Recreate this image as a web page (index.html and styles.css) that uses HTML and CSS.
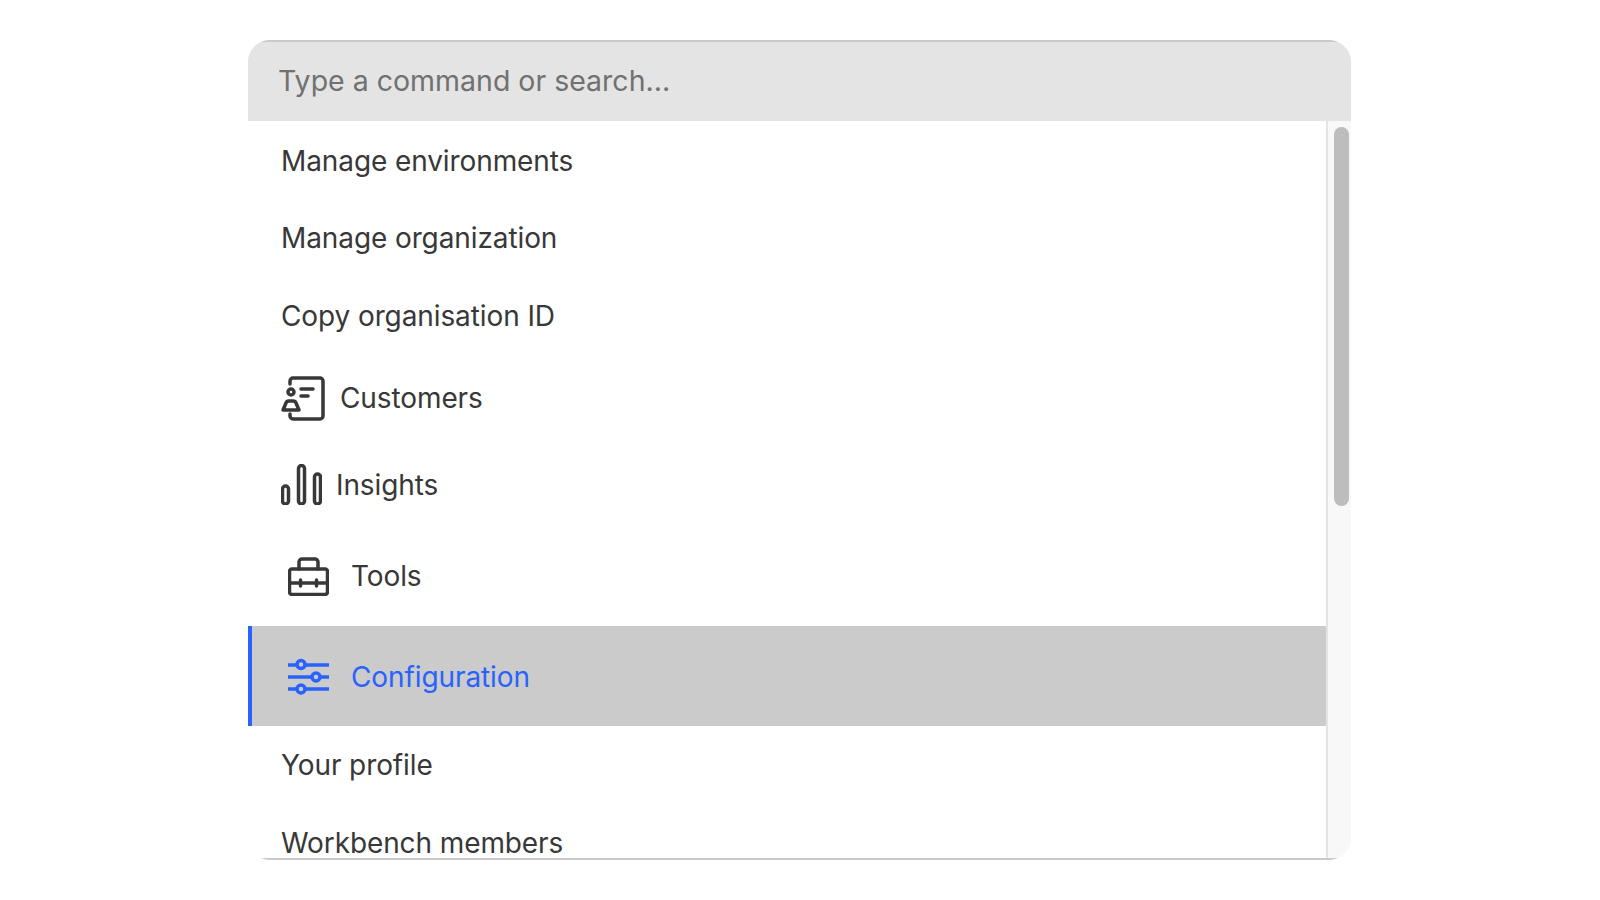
FILE: index.html
```html
<!DOCTYPE html>
<html>
<head>
    <title>Command menu</title>
    <link rel="stylesheet" href="styles.css">
</head>
<body>

    <div class="palette">
        <input class="search" type="text" placeholder="Type a command or search...">
        <div class="results">
            <ul class="list">
                <li class="item">Manage environments</li>
                <li class="item">Manage organization</li>
                <li class="item">Copy organisation ID</li>
                <li class="item item-customers">
                    <svg class="icon" width="44" height="45" viewBox="0 0 44 45">
                        <path d="M9 8V5a3 3 0 0 1 3-3h27a3 3 0 0 1 3 3v35a3 3 0 0 1-3 3H12a3 3 0 0 1-3-3v-2"/>
                        <path d="M20 13h12M20 20h7"/>
                        <circle cx="10" cy="16" r="3"/>
                        <path d="M2 34l3-7a3 3 0 0 1 3-2h4a3 3 0 0 1 3 2l3 7z"/>
                    </svg>
                    Customers
                </li>
                <li class="item item-insights">
                    <svg class="icon" width="41" height="41" viewBox="0 0 41 41">
                        <rect x="1.5" y="22" width="6" height="18" rx="3"/>
                        <rect x="17.5" y="1.5" width="6" height="38.5" rx="3"/>
                        <rect x="33.5" y="10" width="6" height="30" rx="3"/>
                    </svg>
                    Insights
                </li>
                <li class="item item-tools">
                    <svg class="icon" width="41" height="39" viewBox="0 0 41 39">
                        <path d="M11 12V5a3 3 0 0 1 3-3h13a3 3 0 0 1 3 3v7"/>
                        <rect x="1.5" y="12" width="38" height="25.5" rx="2.5"/>
                        <path d="M1.5 26h38M12.5 23v6M28.5 23v6"/>
                    </svg>
                    Tools
                </li>
                <li class="item item-active">
                    <svg class="icon" width="41" height="37" viewBox="0 0 41 37">
                        <path d="M0 7h41M0 19h41M0 31h41"/>
                        <circle class="knob" cx="13" cy="6.5" r="4"/>
                        <circle class="knob" cx="28" cy="19" r="4"/>
                        <circle class="knob" cx="13" cy="31" r="4"/>
                    </svg>
                    Configuration
                </li>
                <li class="item">Your profile</li>
                <li class="item">Workbench members</li>
            </ul>
            <div class="scrollbar">
                <div class="thumb"></div>
            </div>
        </div>
    </div>

</body>
</html>
```

FILE: styles.css
```css
body {
    margin: 0;
    height: 900px;
    padding-top: 40px;
    box-sizing: border-box;
    background-color: #ffffff;
    font-family: Inter, 'Noto Sans', sans-serif;
    color: #383838;
}

.palette {
    width: 1103px;
    height: 820px;
    margin-left: 248px;
    display: flex;
    flex-direction: column;
    overflow: hidden;
    border-radius: 22px;
}

.search {
    height: 81px;
    flex: none;
    box-sizing: border-box;
    padding: 0 0 3px 30px;
    border: none;
    border-top: 2px solid #c9c9c9;
    outline: none;
    background-color: #e4e4e4;
    font-family: inherit;
    font-size: 28.5px;
}

.search::placeholder {
    color: #717171;
}

.results {
    flex: 1;
    min-height: 0;
    display: flex;
    border-bottom: 2px solid #c9c9c9;
}

.list {
    flex: 1;
    min-width: 0;
    margin: 0;
    padding: 0;
    list-style: none;
    overflow: hidden;
}

.item {
    height: 77.5px;
    box-sizing: border-box;
    padding: 2px 0 0 33px;
    display: flex;
    align-items: center;
    font-size: 28px;
    letter-spacing: -0.1px;
    white-space: nowrap;
}

.icon {
    flex: none;
    fill: none;
    stroke: currentColor;
    stroke-width: 3.5;
    stroke-linecap: round;
    stroke-linejoin: round;
}

.item-customers {
    height: 89px;
    padding-top: 0;
}

.item-customers .icon {
    margin-right: 15px;
}

.item-insights {
    height: 84px;
    padding-top: 0;
}

.item-insights .icon {
    margin-right: 14px;
}

.item-tools {
    height: 99px;
    padding-top: 0;
}

.item-tools .icon {
    margin: 0 22px 0 7px;
}

.item-active {
    height: 100px;
    padding-left: 36px;
    border-left: 4px solid #2962ff;
    background-color: #cbcbcb;
    color: #2962ff;
}

.item-active .icon {
    margin: 0 22px 0 0;
}

.knob {
    fill: #cbcbcb;
}

.scrollbar {
    width: 25px;
    flex: none;
    box-sizing: border-box;
    padding: 6px 2px 0 6px;
    border-left: 2px solid #e4e4e4;
    background-color: #f8f8f8;
}

.thumb {
    height: 379px;
    border-radius: 8px;
    background-color: #bdbdbd;
}
```
